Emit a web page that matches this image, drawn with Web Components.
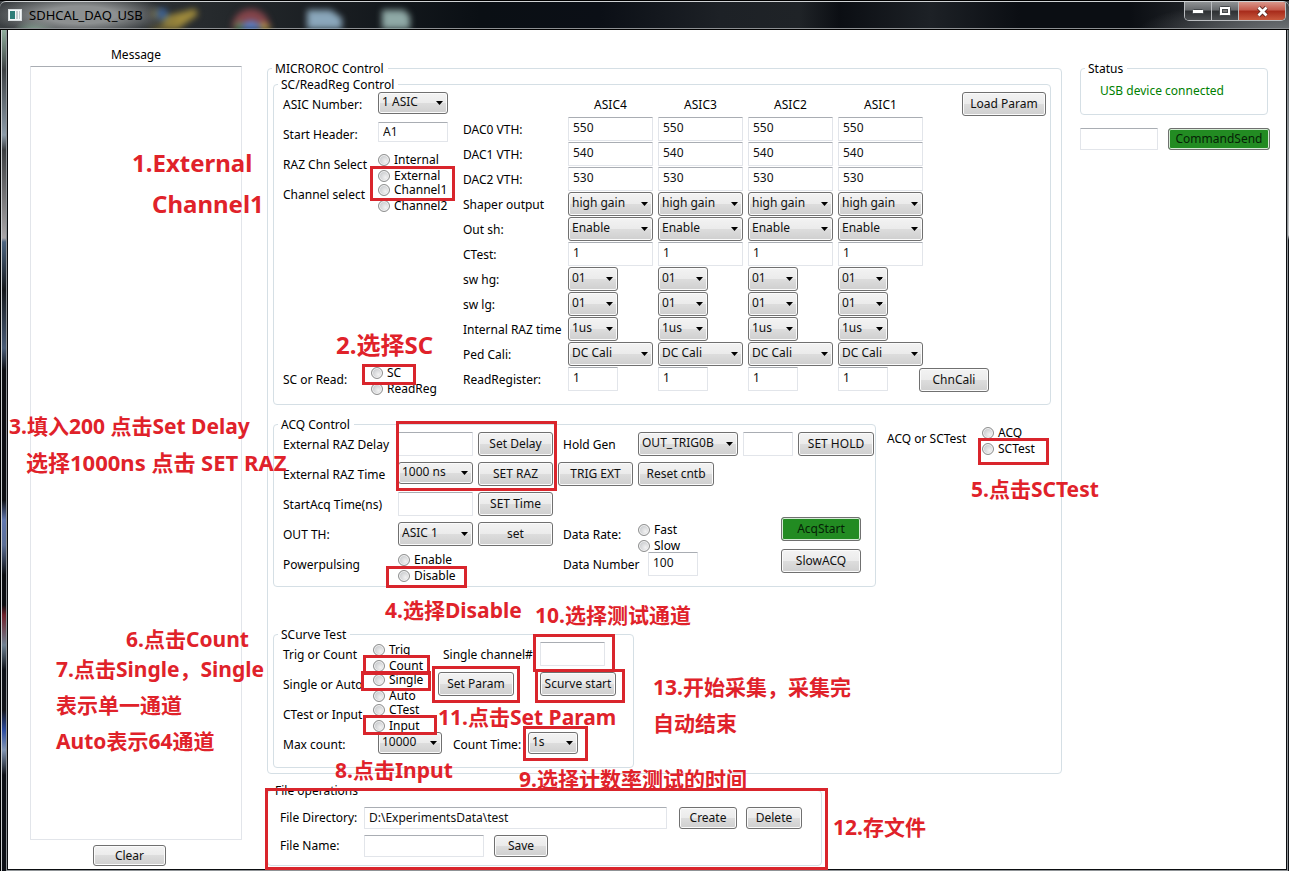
<!DOCTYPE html>
<html lang="zh-CN">
<head>
<meta charset="utf-8">
<title>SDHCAL_DAQ_USB</title>
<style>
  html, body { margin: 0; min-height: 100%; }
  body { background: #0a0c10; }
</style>
</head>
<body>
<app-window></app-window>

<script>
const CONTROLS = `
  * { box-sizing: border-box; }
  :host { display: block; }
  label, .label { padding-top: 2px; line-height: 16px; white-space: nowrap; }
  input, select, button, textarea { font: inherit; color: #111; margin: 0; }
  input[type=text], textarea {
    display: block; width: 100%; height: 24px; background: #fff;
    border: 1px solid #e2e5ea; border-top-color: #a9adb3; border-radius: 1px; padding: 0 4px 3px;
    outline: none; resize: none;
  }
  button {
    display: block; height: 24px; padding: 0; white-space: nowrap; line-height: 16px; text-align: center;
    border: 1px solid #707070; border-radius: 3px; box-shadow: inset 0 0 0 1px #fbfbfb;
    background: linear-gradient(#f3f3f3, #ebebeb 50%, #dddddd 50%, #cfcfcf);
  }
  button.go { background: #228b22; color: #062206; border-color: #707070; box-shadow: inset 0 0 0 1px #d5ecd5; }
  .sel { display: block; position: relative; width: 100%; height: 24px; }
  .low .sel { height: 22px; }
  .sel select {
    appearance: none; display: block; width: 100%; height: 100%; padding: 0 0 3px 3px;
    border: 1px solid #707070; border-radius: 3px; box-shadow: inset 0 0 0 1px #fbfbfb;
    background: linear-gradient(#f3f3f3, #ebebeb 50%, #dddddd 50%, #cfcfcf);
  }
  .sel svg { position: absolute; right: 5px; top: 50%; margin-top: -2px; width: 7px; height: 4px; pointer-events: none; }
`;
const select = (id, value, label) => `<span class="sel"><select ${label ? `aria-label="${label}"` : `id="${id}"`}><option>${value}</option></select><svg viewBox="0 0 7 4"><path d="M0 0H7L3.5 4Z" fill="#000"/></svg></span>`;

function define(name, css, html) {
  const template = document.createElement('template');
  template.innerHTML = `<style>${CONTROLS}${css}</style>${html}`;
  customElements.define(name, class extends HTMLElement {
    constructor() {
      super();
      this.attachShadow({ mode: 'open' }).append(template.content.cloneNode(true));
    }
  });
}

customElements.define('group-box', class extends HTMLElement {
  constructor() {
    super();
    this.attachShadow({ mode: 'open' }).innerHTML = `
      <style>
        :host { display: block; }
        fieldset { margin: 0; padding: 0; min-width: 0; border: 1px solid #d5dfe5; border-radius: 4px; }
        legend { box-sizing: border-box; margin-left: 4px; padding: 1px 4px 0 3px; line-height: 16px; height: 16px; white-space: nowrap; }
      </style>
      <fieldset><legend></legend><slot></slot></fieldset>`;
    this.shadowRoot.querySelector('legend').textContent = this.getAttribute('heading');
  }
});

customElements.define('radio-pair', class extends HTMLElement {
  constructor() {
    super();
    const row = text => `<label><input type="radio" name="choice">${text}</label>`;
    this.attachShadow({ mode: 'open' }).innerHTML = `
      <style>
        :host { display: block; height: 24px; }
        label { display: flex; align-items: center; gap: 4px; height: 16px; line-height: 14px; white-space: nowrap; }
        input {
          appearance: none; flex: none; width: 12px; height: 12px; margin: 0; border-radius: 50%;
          border: 1px solid #8e8f8f; box-shadow: inset 0 0 0 1px #f4f4f4;
          background: radial-gradient(circle at 65% 65%, #f2f2f2, #b9bcc0);
        }
        input:checked { background: radial-gradient(circle, #1f4f73 35%, #e6e6e6 40%); }
      </style>
      ${this.getAttribute('options').split(',').map(row).join('')}`;
    this.setAttribute('role', 'radiogroup');
  }
});

define('title-bar', `
  :host {
    height: 30px; border-top: 1px solid #000; color: #000; font-size: 13px;
    background:
      radial-gradient(ellipse 90px 22px at 80px 14px, #8d9091 0 40%, #8d909100),
      radial-gradient(ellipse 22px 12px at 35px 30px, #7fae91, #7fae9100),
      radial-gradient(ellipse 150px 30px at 100% 100%, #6d7174, #6d717400),
      linear-gradient(90deg, #3b3f42, #24282b 230px, #0a0f14 480px, #0b0f16 600px, #1d2126 720px, #1f2327 800px, #0b0e13 840px, #1d2126 930px, #0b0e13 1020px, #0b0e13 1130px, #3d4043);
  }
  .bar { position: relative; overflow: hidden; display: flex; height: 29px; padding-right: 3px; border-top: 1px solid #cfd2d4; border-bottom: 1px solid #000; box-shadow: inset 0 -1px #8c8f92; border-radius: 6px 6px 0 0; }
  .desk { position: absolute; left: 140px; top: 0; width: 290px; height: 27px; filter: blur(3px); }
  .app { margin: 7px 7px 0 8px; width: 14px; height: 12px; flex: none; }
  .name { position: relative; flex: 1; line-height: 26px; }
  .caps { position: relative; display: flex; height: 19px; border: 1px solid #b9bcbf; border-top: 0; border-radius: 0 0 5px 5px; overflow: hidden; flex: none; }
  .caps button { width: 27px; height: 100%; border: 0; border-right: 1px solid #b9bcbf; border-radius: 0; box-shadow: none; background: linear-gradient(#8f9294, #66696c 45%, #2d3033 50%, #4b4e51); display: grid; place-items: center; }
  .caps button:last-child { width: 46px; border-right: 0; background: linear-gradient(#d9968a, #c4594a 45%, #a72a1a 50%, #c8593d); }
`, `
  <div class="bar">
    <svg class="desk" viewBox="0 0 290 27" aria-hidden="true">
      <path d="M14 10L26 18L56 10L36 24L8 30" fill="none" stroke="#a08b3c" stroke-width="7"/>
      <circle cx="22" cy="12" r="6" fill="#395d8f"/>
      <circle cx="111" cy="26" r="19" fill="#84444a"/><circle cx="111" cy="30" r="11" fill="#5d86d0"/>
      <path d="M92 30L100 18L104 36Z" fill="#4f9b5a"/><path d="M122 20L134 28H120Z" fill="#cdb64b"/>
      <path d="M167 8H191L202 16V36H167Z" fill="#8aa7bb"/><path d="M242 8H264L270 14V36H242Z" fill="#8fa9a6"/>
    </svg>
    <svg class="app" viewBox="0 0 14 12"><rect x=".5" y=".5" width="13" height="11" fill="#f5f7f8" stroke="#d9dee0"/><rect x="2" y="2" width="5" height="8" fill="#2f7d78"/><rect x="8" y="2" width="2" height="8" fill="#c3cacd"/><rect x="11" y="2" width="1" height="8" fill="#c3cacd"/></svg>
    <span class="name">SDHCAL_DAQ_USB</span>
    <div class="caps">
      <button aria-label="Minimize"><svg width="12" height="6"><rect x=".5" y="1.5" width="11" height="4" rx="1" fill="#fff" stroke="#45494c"/></svg></button>
      <button aria-label="Maximize"><svg width="12" height="10"><rect x=".5" y=".5" width="11" height="9" rx="1" fill="#fff" stroke="#45494c"/><rect x="3.5" y="3.5" width="5" height="3" fill="#777" stroke="#45494c"/></svg></button>
      <button aria-label="Close"><svg width="13" height="11" viewBox="0 0 13 11"><path d="M2.5 1.5L10.5 9.5M10.5 1.5L2.5 9.5" stroke="#5a2720" stroke-width="4.5"/><path d="M2.5 1.5L10.5 9.5M10.5 1.5L2.5 9.5" stroke="#fff" stroke-width="2.8"/></svg></button>
    </div>
  </div>`);

define('message-panel', `
  :host { display: flex; flex-direction: column; padding: 15px 0 3px; }
  label { text-align: center; margin-bottom: 3px; }
  textarea { flex: 1; min-height: 300px; }
  button { width: 73px; height: 21px; margin: 5px 0 0 63px; }
`, `
  <label for="msg">Message</label>
  <textarea id="msg"></textarea>
  <button>Clear</button>`);

const COLS = [4, 3, 2, 1];
const ROWS = [
  ['DAC0 VTH:', 'text', '550'], ['DAC1 VTH:', 'text', '540'], ['DAC2 VTH:', 'text', '530'],
  ['Shaper output', 'list', 'high gain'], ['Out sh:', 'list', 'Enable'], ['CTest:', 'text', '1'],
  ['sw hg:', 'list', '01', 1], ['sw lg:', 'list', '01', 1], ['Internal RAZ time', 'list', '1us', 1],
  ['Ped Cali:', 'list', 'DC Cali'], ['ReadRegister:', 'text', '1', 1],
];
const cell = ([name, kind, value, small], n) => `<td><div class="${small ? 'small' : ''}">${
  kind === 'text' ? `<input type="text" value="${value}" aria-label="${name} ASIC${n}">` : select('', value, `${name} ASIC${n}`)
}</div></td>`;

define('sc-panel', `
  .body { display: flex; padding: 0 4px 12px 9px; }
  .left { flex: none; width: 180px; display: flex; flex-direction: column; justify-content: space-between; }
  .form { display: grid; grid-template-columns: 95px 70px; grid-auto-rows: 24px; row-gap: 6px; }
  .form label, .form .label { align-self: center; }
  .form input.field { height: 20px; padding-bottom: 1px; }
  .mode { display: grid; grid-template-columns: 88px 1fr; height: 27px; }
  .mode .label { padding-top: 7px; }
  table { flex: none; border-collapse: collapse; table-layout: fixed; width: 460px; }
  tr { height: 25px; }
  th, td { padding: 0 5px 0 0; font-weight: normal; text-align: center; line-height: 16px; }
  td { vertical-align: top; }
  th:last-child, td:last-child { padding-right: 0; }
  th[scope=row] { text-align: left; white-space: nowrap; padding: 0; }
  col.name { width: 105px; } col.last { width: 85px; }
  td div { height: 24px; text-align: left; }
  td .small { width: 50px; }
  .side { flex: 1; margin-left: -4px; display: flex; flex-direction: column; justify-content: space-between; }
  .side button:first-child { width: 84px; align-self: flex-end; }
  .side button:last-child { width: 70px; }
`, `
  <div class="body">
    <div class="left">
      <div class="form">
        <label for="asic">ASIC Number:</label><div class="low">${select('asic', '1 ASIC')}</div>
        <label for="head">Start Header:</label><input id="head" class="field" type="text" value="A1">
        <span class="label">RAZ Chn Select</span><radio-pair options="Internal,External" aria-label="RAZ Chn Select"></radio-pair>
        <span class="label">Channel select</span><radio-pair options="Channel1,Channel2" aria-label="Channel select"></radio-pair>
      </div>
      <div class="mode">
        <span class="label">SC or Read:</span><radio-pair options="SC,ReadReg" aria-label="SC or Read"></radio-pair>
      </div>
    </div>
    <table>
      <colgroup><col class="name"><col><col><col><col class="last"></colgroup>
      <thead><tr><td></td>${COLS.map(n => `<th scope="col">ASIC${n}</th>`).join('')}</tr></thead>
      <tbody>${ROWS.map(r => `<tr><th scope="row">${r[0]}</th>${COLS.map(n => cell(r, n)).join('')}</tr>`).join('')}</tbody>
    </table>
    <div class="side"><button>Load Param</button><button>ChnCali</button></div>
  </div>`);

define('acq-panel', `
  .body { display: grid; padding: 0 0 10px 9px; grid-template-columns: 110px 75px 75px 75px 100px 50px 76px; grid-template-rows: repeat(5, 24px); gap: 6px 5px; }
  label, .label { align-self: center; }
  .c1 { grid-column: 1; }
  .c4 { grid-column: 4; padding-left: 5px; }
  .r4 { grid-row: 4; }
  .r5 { grid-row: 5; }
  .wide { width: 76px; }
  .runs { grid-area: 4 / 6 / 6 / 8; align-self: end; justify-self: end; margin: 0 13px 3px 0; display: grid; gap: 8px; }
  .runs button { width: 80px; }
  input.count { grid-column: 5; width: 50px; margin-left: 10px; }
`, `
  <div class="body">
    <label for="delay">External RAZ Delay</label><input id="delay" type="text"><button>Set Delay</button>
    <label class="c4" for="hold">Hold Gen</label>${select('hold', 'OUT_TRIG0B')}<input type="text" aria-label="Hold value"><button>SET HOLD</button>
    <label for="raz">External RAZ Time</label><div class="low">${select('raz', '1000 ns')}</div><button>SET RAZ</button><button>TRIG EXT</button><button class="wide">Reset cntb</button>
    <label class="c1" for="start">StartAcq Time(ns)</label><input id="start" type="text"><button>SET Time</button>
    <label class="c1 r4" for="th">OUT TH:</label>${select('th', 'ASIC 1').replace('"sel"', '"sel r4"')}<button class="r4">set</button>
    <span class="label c4 r4">Data Rate:</span><radio-pair class="r4" options="Fast,Slow" aria-label="Data Rate"></radio-pair>
    <span class="label c1 r5">Powerpulsing</span><radio-pair class="r5" options="Enable,Disable" aria-label="Powerpulsing"></radio-pair>
    <label class="c4 r5" for="num">Data Number</label><input class="count r5" id="num" type="text" value="100">
    <div class="runs"><button class="go">AcqStart</button><button>SlowACQ</button></div>
  </div>`);

define('scurve-panel', `
  .body { display: grid; padding: 0 0 11px 9px; grid-template-columns: 90px 65px 102px 76px; grid-template-rows: repeat(4, 24px); row-gap: 6px; }
  label, .label { align-self: center; }
  .c1 { grid-column: 1; }
  .ch { padding-left: 5px; }
  input.num { width: 65px; }
  .set { width: 76px; }
  .max { width: 64px; margin-left: 5px; }
  .time { grid-column: 3 / 5; display: grid; grid-template-columns: 75px 50px; padding-left: 15px; }
`, `
  <div class="body">
    <span class="label">Trig or Count</span><radio-pair options="Trig,Count" aria-label="Trig or Count"></radio-pair>
    <label class="ch" for="ch">Single channel#</label><input class="num" id="ch" type="text">
    <span class="label">Single or Auto</span><radio-pair options="Single,Auto" aria-label="Single or Auto"></radio-pair>
    <button class="set">Set Param</button><button>Scurve start</button>
    <span class="label c1">CTest or Input</span><radio-pair options="CTest,Input" aria-label="CTest or Input"></radio-pair>
    <label class="c1" for="max">Max count:</label><div class="max low">${select('max', '10000')}</div>
    <div class="time"><label for="ct">Count Time:</label><div class="low">${select('ct', '1s')}</div></div>
  </div>`);

define('file-panel', `
  .body { padding: 8px 12px; display: grid; gap: 5px; }
  .row { display: flex; align-items: center; height: 23px; }
  label { width: 84px; flex: none; padding: 0; }
  input[type=text], button { height: 22px; flex: none; }
  input.dir { width: 303px; padding-bottom: 0; }
  input.file { width: 120px; }
  .create { width: 58px; margin: 0 9px 0 12px; }
  .del { width: 56px; }
  .save { width: 54px; margin-left: 10px; }
`, `
  <div class="body">
    <div class="row"><label for="dir">File Directory:</label><input class="dir" id="dir" type="text" value="D:\\ExperimentsData\\test"><button class="create">Create</button><button class="del">Delete</button></div>
    <div class="row"><label for="file">File Name:</label><input class="file" id="file" type="text"><button class="save">Save</button></div>
  </div>`);

define('status-panel', `
  :host { padding-top: 30px; }
  .state { color: #008000; padding: 6px 0 15px 19px; line-height: 17px; white-space: nowrap; }
  .send { display: flex; gap: 10px; margin-top: 13px; }
  .send input[type=text] { width: 78px; height: 22px; flex: none; }
  .send button { width: 102px; height: 22px; flex: none; }
`, `
  <group-box heading="Status"><div class="state">USB device connected</div></group-box>
  <div class="send"><input type="text" aria-label="Command"><button class="go">CommandSend</button></div>`);

define('control-panel', `
  :host { padding: 30px 0 2px; }
  .inner { padding: 0 10px 5px 5px; }
  .acq { display: flex; margin: 11px 0 39px; }
  .acq group-box { flex: none; width: 603px; }
  .pick { display: grid; grid-template-columns: 95px 1fr; margin: 9px 0 0 11px; height: 24px; }
  .pick .label { padding-top: 6px; }
  .curve { width: 361px; }
  .files { width: 555px; margin-top: 8px; }
`, `
  <group-box heading="MICROROC Control">
    <div class="inner">
      <group-box heading="SC/ReadReg Control"><sc-panel></sc-panel></group-box>
      <div class="acq">
        <group-box heading="ACQ Control"><acq-panel></acq-panel></group-box>
        <div class="pick"><span class="label">ACQ or SCTest</span><radio-pair options="ACQ,SCTest" aria-label="ACQ or SCTest"></radio-pair></div>
      </div>
      <group-box class="curve" heading="SCurve Test"><scurve-panel></scurve-panel></group-box>
    </div>
  </group-box>
  <group-box class="files" heading="File operations"><file-panel></file-panel></group-box>`);

/* Tutorial marks drawn over the window: numbered notes and highlight frames. */
const NOTES = [
  [132, 163, '1.External', 24], [152, 204, 'Channel1', 24], [336, 345, '2.选择SC', 24],
  [9, 426, '3.填入200 点击Set Delay'], [26, 462, '选择1000ns 点击 SET RAZ', 22],
  [385, 610, '4.选择Disable'], [971, 489, '5.点击SCTest'], [126, 639, '6.点击Count'],
  [56, 669, '7.点击Single，Single'], [56, 705, '表示单一通道'], [56, 741, 'Auto表示64通道'],
  [335, 770, '8.点击Input'], [519, 779, '9.选择计数率测试的时间'], [535, 615, '10.选择测试通道'],
  [438, 717, '11.点击Set Param'], [833, 827, '12.存文件'], [653, 687, '13.开始采集，采集完'], [653, 723, '自动结束'],
];
const FRAMES = [
  [370, 166, 85, 35], [362, 364, 54, 21], [396, 421, 161, 70], [386, 566, 81, 22], [978, 438, 71, 27],
  [363, 655, 67, 20], [361, 671, 70, 20], [363, 715, 74, 20], [533, 634, 82, 38], [535, 669, 90, 34],
  [432, 666, 88, 37], [523, 726, 65, 35], [265, 788, 563, 82],
];
define('guide-marks', `
  :host { position: absolute; inset: 0; pointer-events: none; color: #e0222a; font-weight: 700; }
  span { position: absolute; line-height: 30px; white-space: nowrap; }
  i { position: absolute; border: 3px solid #d9252c; }
`, NOTES.map(([x, y, text, size = 21]) => `<span style="left:${x}px;top:${y - 15}px;font-size:${size}px">${text}</span>`).join('') +
   FRAMES.map(([x, y, w, h]) => `<i style="left:${x}px;top:${y}px;width:${w}px;height:${h}px"></i>`).join(''));

define('app-window', `
  :host { position: relative; display: flex; flex-direction: column; min-height: 100vh; font: 12px/16px "Noto Sans", "Noto Sans CJK SC", sans-serif; color: #000; }
  .frame {
    flex: 1; display: flex; padding: 0 3px 2px 8px;
    background:
      linear-gradient(90deg, #000 1px, #c9cccf 1px 2px, #0000 2px) left / 8px 100% no-repeat,
      linear-gradient(#4a5154, #8a8f92 100px, #c6c8ca 205px, #101318 210px) right / 8px 100% no-repeat,
      linear-gradient(#8fae9c, #3c4043 40px, #8c9ba8 105px, #3b3e41 120px, #a9a6a8 208px, #4c6480 212px, #14171b 260px, #4a5d78 318px, #0c0e12 340px, #0c0e12 470px, #6077b0 490px, #5c6f96 515px, #0b0d11 545px, #0b0d11 575px, #70202a 585px, #6f8192 615px, #0c1017 640px, #12141a 680px, #2b4ba0 700px, #8296b4 720px, #0d1016 745px);
  }
  .client { flex: 1; background: #fff; box-shadow: 0 0 0 1px #0b0d10, 0 0 0 2px #8f9396; display: grid; grid-template-columns: 212px minmax(838px, 1fr) 188px; padding: 0 18px 0 22px; }
  title-bar { position: relative; }
  control-panel { margin: 0 18px 0 25px; }
`, `
  <title-bar></title-bar>
  <div class="frame"><main class="client"><message-panel></message-panel><control-panel></control-panel><status-panel></status-panel></main></div>
  <guide-marks></guide-marks>`);
</script>
</body>
</html>
